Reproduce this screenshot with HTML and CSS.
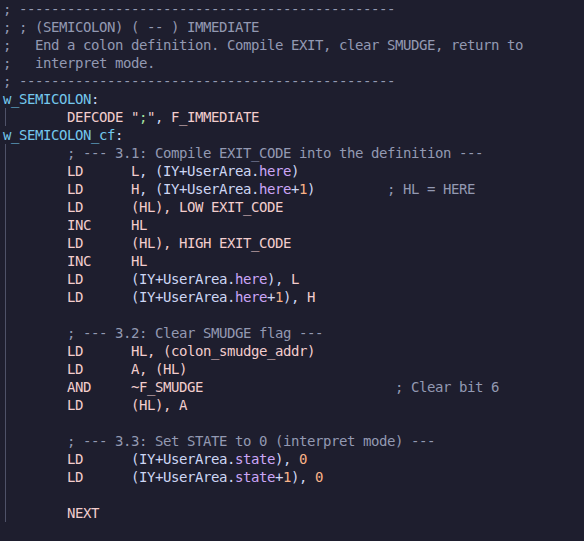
FILE: index.html
```html
<!DOCTYPE html>
<html>
<head>
<meta charset="utf-8">
<link rel="stylesheet" href="styles.css">
</head>
<body>
<div class="editor">
<div class="ln c">; -----------------------------------------------</div>
<div class="ln c">; ; (SEMICOLON) ( -- ) IMMEDIATE</div>
<div class="ln c">;   End a colon definition. Compile EXIT, clear SMUDGE, return to</div>
<div class="ln c">;   interpret mode.</div>
<div class="ln c">; -----------------------------------------------</div>
<div class="ln"><span class="lbl">w_SEMICOLON</span><span class="op">:</span></div>
<div class="guide">
<div class="ln">        <span class="kw">DEFCODE</span> <span class="kw">"</span><span class="str">;</span><span class="kw">"</span><span class="op">,</span> <span class="kw">F_IMMEDIATE</span></div>
</div>
<div class="ln"><span class="lbl">w_SEMICOLON_cf</span><span class="op">:</span></div>
<div class="guide">
<div class="ln">        <span class="c">; --- 3.1: Compile EXIT_CODE into the definition ---</span></div>
<div class="ln">        <span class="kw">LD      L</span><span class="op">, (IY+UserArea.</span><span class="fld">here</span><span class="op">)</span></div>
<div class="ln">        <span class="kw">LD      H</span><span class="op">, (IY+UserArea.</span><span class="fld">here</span><span class="op">+</span><span class="num">1</span><span class="op">)</span>         <span class="c">; HL = HERE</span></div>
<div class="ln">        <span class="kw">LD      (HL), LOW EXIT_CODE</span></div>
<div class="ln">        <span class="kw">INC     HL</span></div>
<div class="ln">        <span class="kw">LD      (HL), HIGH EXIT_CODE</span></div>
<div class="ln">        <span class="kw">INC     HL</span></div>
<div class="ln">        <span class="kw">LD      </span><span class="op">(IY+UserArea.</span><span class="fld">here</span><span class="op">), </span><span class="kw">L</span></div>
<div class="ln">        <span class="kw">LD      </span><span class="op">(IY+UserArea.</span><span class="fld">here</span><span class="op">+</span><span class="num">1</span><span class="op">), </span><span class="kw">H</span></div>
<div class="ln"> </div>
<div class="ln">        <span class="c">; --- 3.2: Clear SMUDGE flag ---</span></div>
<div class="ln">        <span class="kw">LD      HL, (colon_smudge_addr)</span></div>
<div class="ln">        <span class="kw">LD      A, (HL)</span></div>
<div class="ln">        <span class="kw">AND     ~F_SMUDGE</span>                        <span class="c">; Clear bit 6</span></div>
<div class="ln">        <span class="kw">LD      (HL), A</span></div>
<div class="ln"> </div>
<div class="ln">        <span class="c">; --- 3.3: Set STATE to 0 (interpret mode) ---</span></div>
<div class="ln">        <span class="kw">LD      </span><span class="op">(IY+UserArea.</span><span class="fld">state</span><span class="op">), </span><span class="num">0</span></div>
<div class="ln">        <span class="kw">LD      </span><span class="op">(IY+UserArea.</span><span class="fld">state</span><span class="op">+</span><span class="num">1</span><span class="op">), </span><span class="num">0</span></div>
<div class="ln"> </div>
<div class="ln">        <span class="kw">NEXT</span></div>
</div>
</div>
</body>
</html>
```
FILE: styles.css
```css
html, body {
  margin: 0;
  padding: 0;
  background: #1e1e2e;
}
.editor {
  background: #1e1e2e;
  min-height: 541px;
  padding-left: 3px;
  font-family: "DejaVu Sans Mono", monospace;
  font-size: 14px;
  letter-spacing: -0.43px;
  color: #cdd6f4;
}
.ln {
  height: 18px;
  line-height: 18px;
  white-space: pre;
}
.guide {
  margin-left: -3px;
  padding-left: 3px;
  background: linear-gradient(#4f5268, #4f5268) no-repeat 5px 0 / 1px 100%;
}
.c { color: #9399b2; }
.lbl { color: #74c7ec; }
.kw { color: #f2cdcd; }
.op { color: #cdd6f4; }
.fld { color: #cba6f7; }
.num { color: #fab387; }
.str { color: #a6e3a1; }
```
